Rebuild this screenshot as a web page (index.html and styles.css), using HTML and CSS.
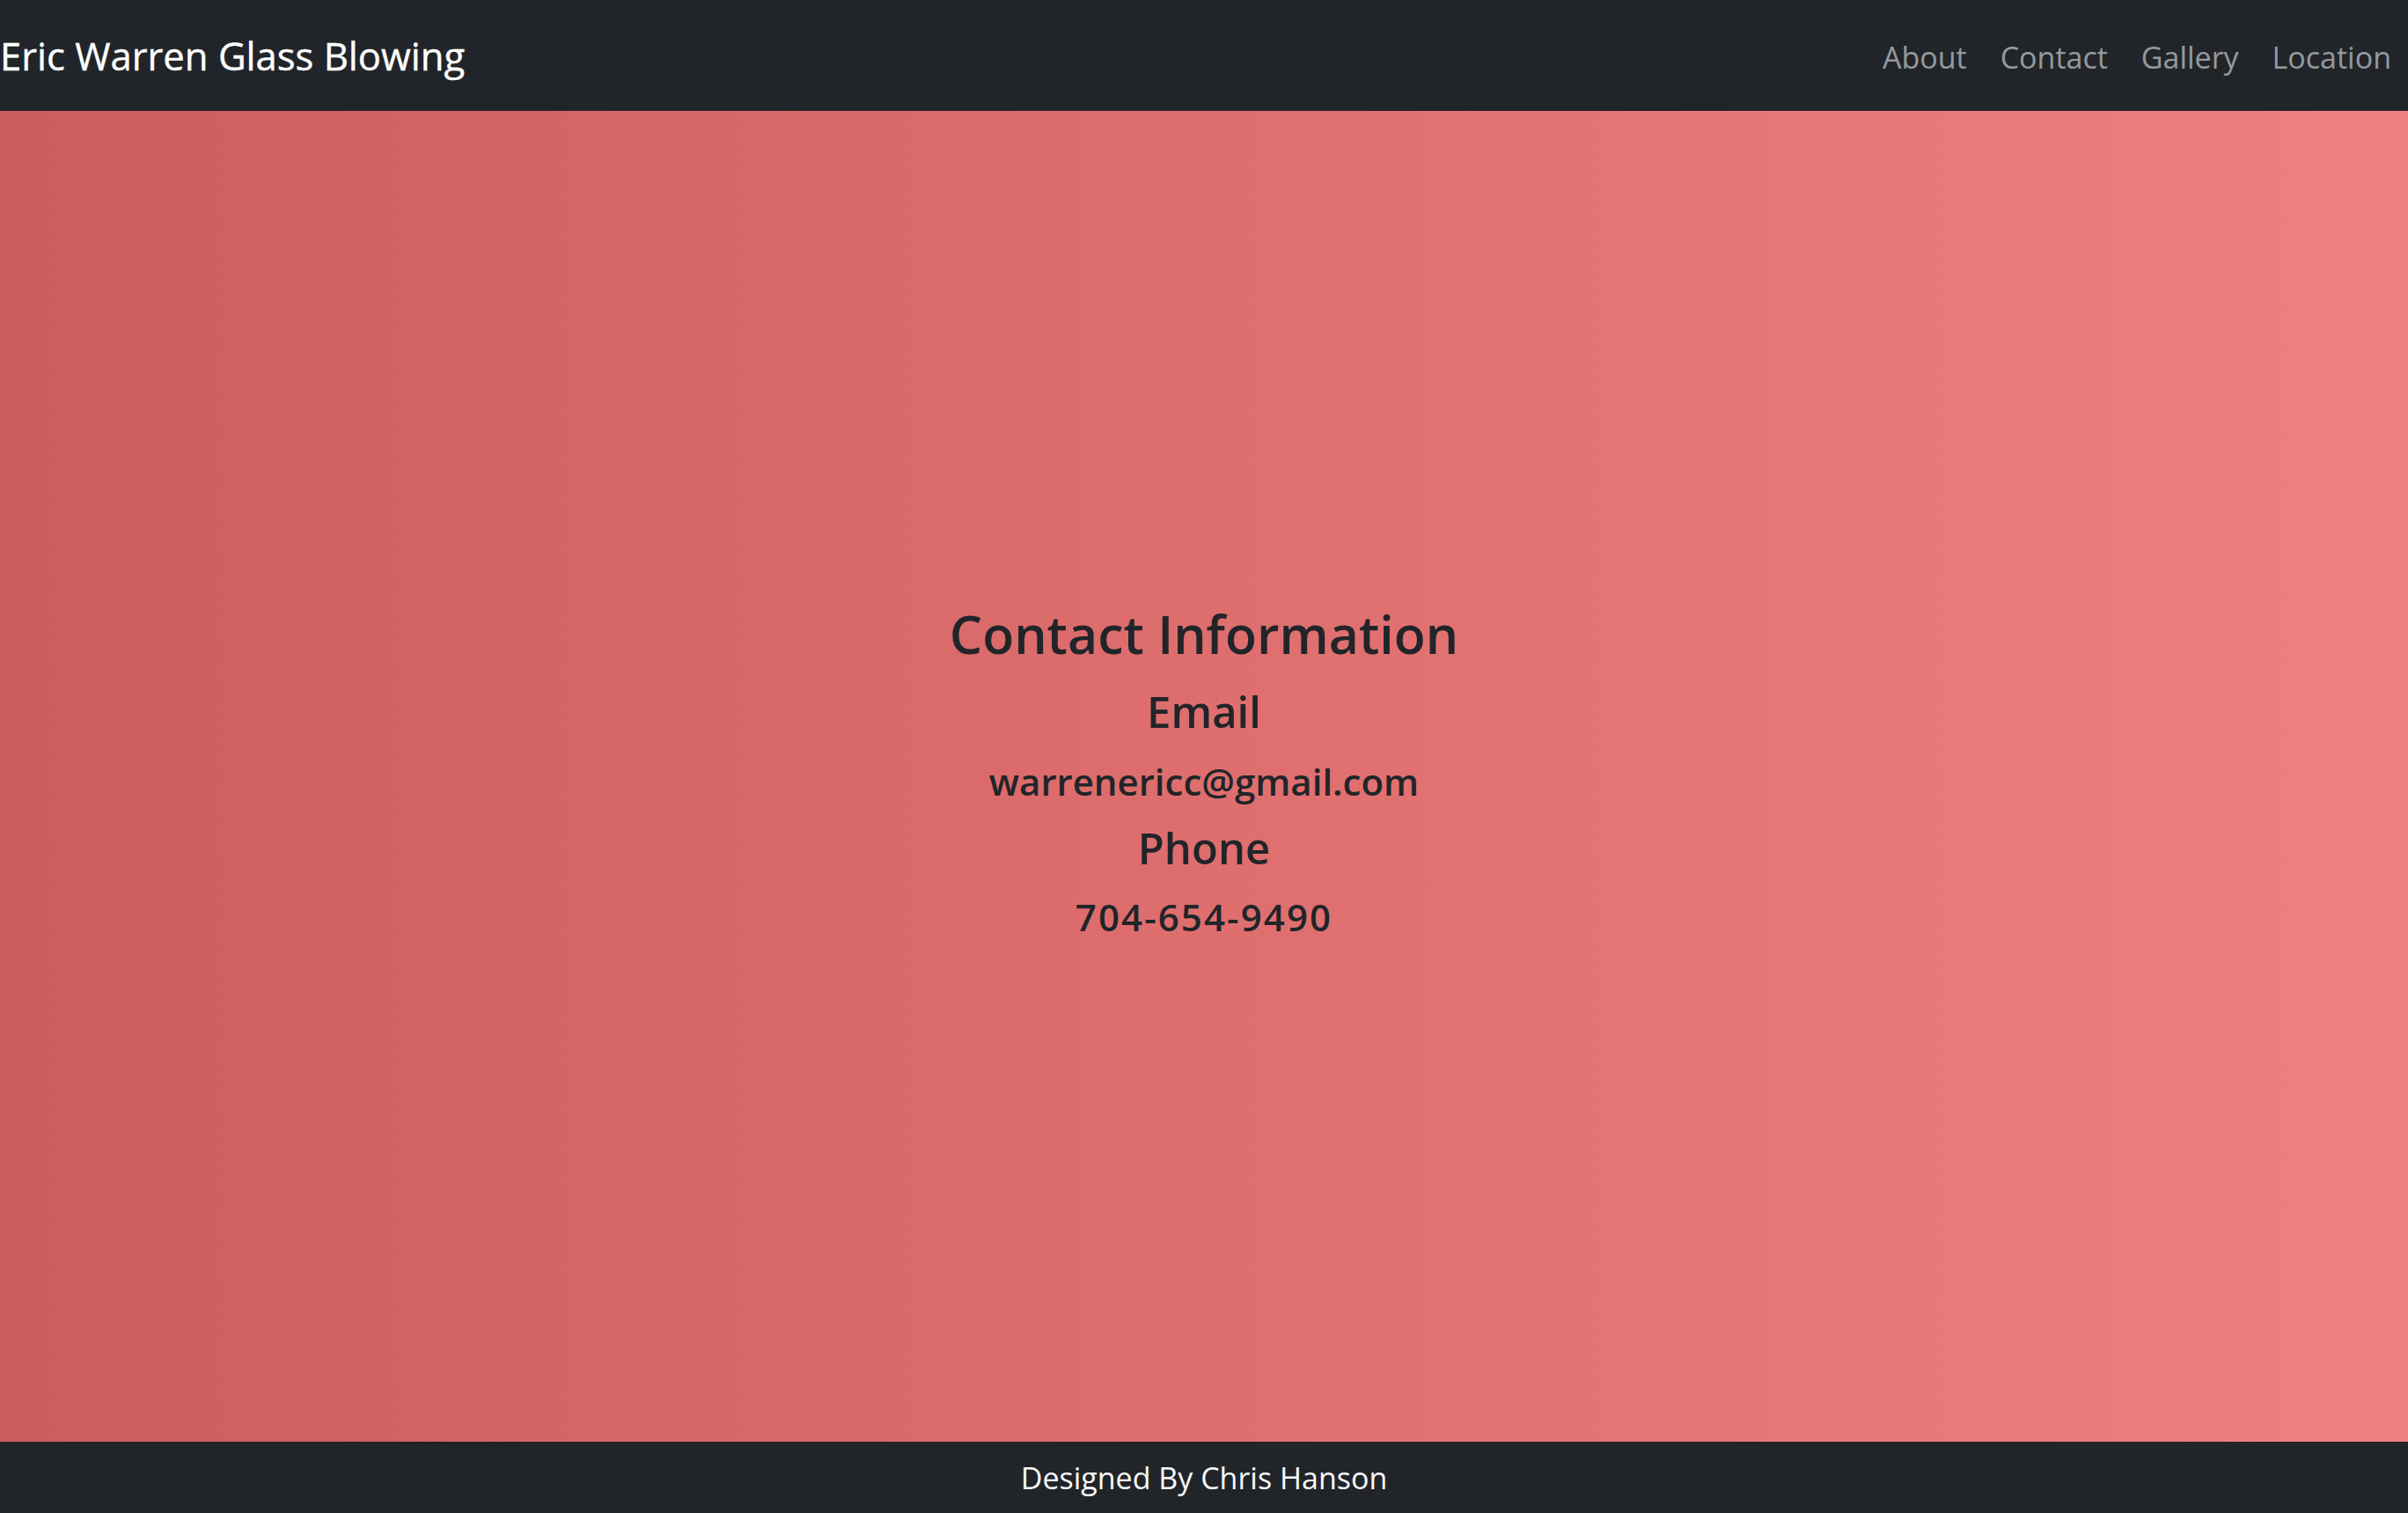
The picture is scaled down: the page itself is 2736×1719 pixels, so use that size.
FILE: index.html
```html
<!DOCTYPE html>
<html lang="en">
<head>
<meta charset="utf-8">
<title>Contact - Eric Warren Glass Blowing</title>
<link rel="stylesheet" href="styles.css">
</head>
<body>
<nav class="navbar">
  <a class="brand" href="#">Eric Warren Glass Blowing</a>
  <ul class="nav-links">
    <li><a href="#">About</a></li>
    <li><a href="#">Contact</a></li>
    <li><a href="#">Gallery</a></li>
    <li><a href="#">Location</a></li>
  </ul>
</nav>
<main class="hero">
  <section class="contact">
    <h1 class="title">Contact Information</h1>
    <h2 class="label">Email</h2>
    <p class="value">warrenericc@gmail.com</p>
    <h2 class="label label-phone">Phone</h2>
    <p class="value value-phone">704-654-9490</p>
  </section>
</main>
<footer class="footer">Designed By Chris Hanson</footer>
</body>
</html>
```
FILE: styles.css
```css
html, body {
  margin: 0;
  padding: 0;
  height: 100%;
}
body {
  font-family: "Open Sans", "Noto Sans", sans-serif;
  color: #212529;
  display: flex;
  flex-direction: column;
  min-height: 100vh;
}
.navbar {
  height: 126px;
  flex: 0 0 auto;
  background: #212529;
  display: flex;
  align-items: center;
  justify-content: space-between;
  padding: 0;
}
.brand {
  color: #ffffff;
  text-decoration: none;
  font-size: 43.6px;
  font-weight: 500;
  line-height: 60px;
  -webkit-text-stroke: 0.4px #ffffff;
}
.nav-links {
  list-style: none;
  margin: 4px 0 0;
  padding: 0;
  display: flex;
}
.nav-links a {
  display: block;
  padding: 0 19px;
  color: rgba(255, 255, 255, 0.55);
  text-decoration: none;
  font-size: 34px;
  line-height: 60px;
}
.hero {
  flex: 1 1 auto;
  background: linear-gradient(to right, #cd5c5c, #f08080);
  display: flex;
  align-items: center;
  justify-content: center;
  padding-bottom: 10px;
}
.contact {
  text-align: center;
}
.title {
  margin: 0;
  font-size: 59px;
  font-weight: 600;
  line-height: 96px;
}
.label {
  margin: 0;
  font-size: 49px;
  font-weight: 600;
  line-height: 81px;
}
.label-phone {
  line-height: 75px;
}
.value {
  margin: 0;
  font-size: 42px;
  font-weight: 600;
  line-height: 77px;
}
.value-phone {
  line-height: 81px;
  letter-spacing: 2.1px;
}
.footer {
  flex: 0 0 auto;
  height: 81px;
  background: #212529;
  color: #f8f9fa;
  display: flex;
  align-items: center;
  justify-content: center;
  font-size: 34px;
}
```
